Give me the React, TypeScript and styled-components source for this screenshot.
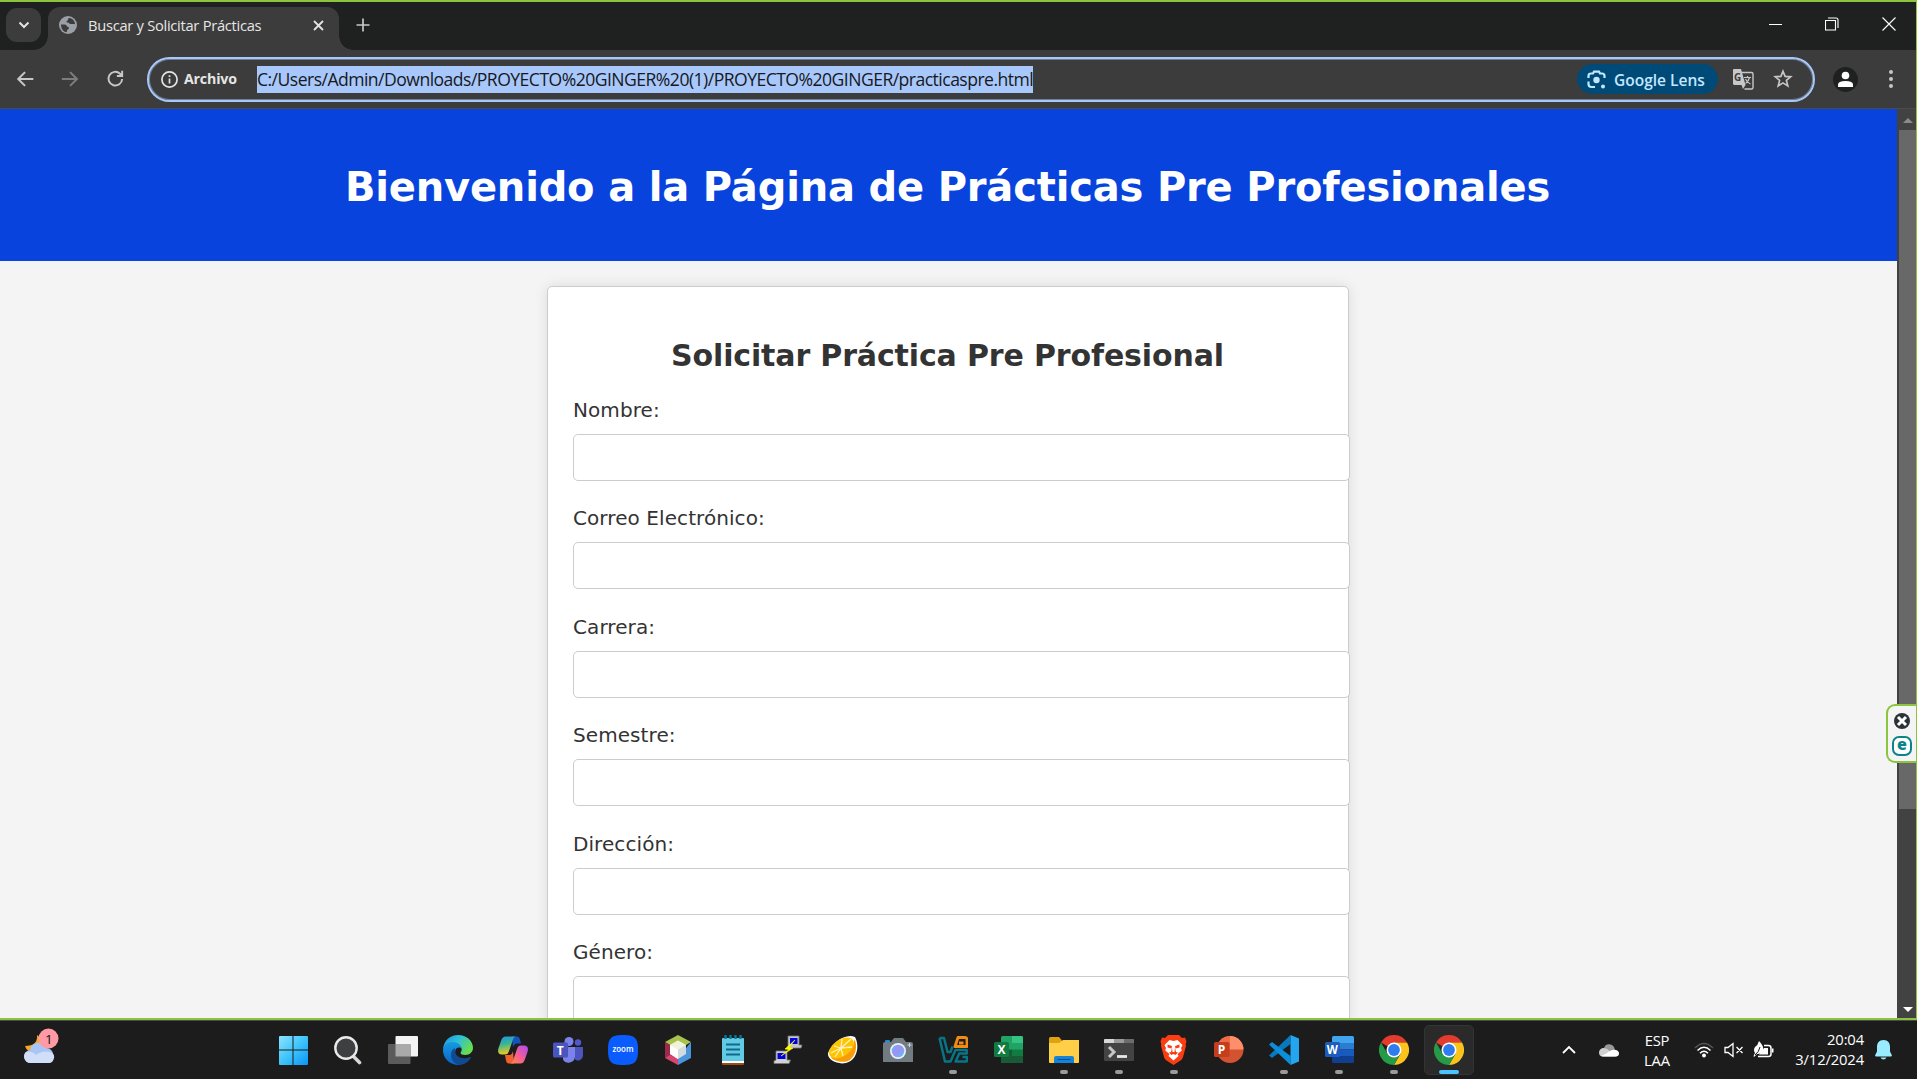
import React from 'react';
import styled, { createGlobalStyle } from 'styled-components';

const Global = createGlobalStyle`
  html, body { margin: 0; padding: 0; background: #1c1c1c; overflow: hidden; }
  * { box-sizing: border-box; }
  svg { display: block; flex: none; }
`;
const ui = `"Open Sans", "Noto Sans", sans-serif`;

const Screen = styled.div`
  width: 1917px; height: 1079px; display: flex; flex-direction: column; overflow: hidden; position: relative;
  font-family: ${ui};
`;
const Browser = styled.div`
  height: 1020px; flex: none; display: flex; flex-direction: column; overflow: hidden;
  border-top: 2px solid #8bc53f; border-right: 1px solid #8bc53f; border-bottom: 2px solid #8bc53f; background: #3c3c3c;
`;
const TabStrip = styled.div`
  height: 48px; flex: none; background: #1f2120; display: flex; padding-left: 6px;
`;
const TabSearch = styled.div`
  width: 35px; height: 34px; margin-top: 6px; border-radius: 11px; background: #3c3c3c; display: grid; place-items: center;
`;
const Tab = styled.div`
  margin: 5px 0 0 7px; width: 291px; height: 43px; border-radius: 12px 12px 0 0; background: #3c3c3c;
  display: flex; align-items: center; padding: 0 14px 7px 11px; gap: 11px; position: relative;
  &::before, &::after { content: ''; position: absolute; bottom: 0; width: 14px; height: 14px; }
  &::before { left: -14px; background: radial-gradient(circle at 0 0, transparent 13.5px, #3c3c3c 14px); }
  &::after { right: -14px; background: radial-gradient(circle at 100% 0, transparent 13.5px, #3c3c3c 14px); }
`;
const TabTitle = styled.span`
  flex: 1; font-size: 14.7px; letter-spacing: -0.28px; color: #e6e6e6; white-space: nowrap;
`;
const NewTab = styled.div`width: 48px; height: 46px; display: grid; place-items: center;`;
const WindowButtons = styled.div`
  margin-left: auto; display: flex; align-items: flex-start; padding: 15px 20px 0 0; gap: 43px;
`;
const Toolbar = styled.div`
  height: 59px; flex: none; display: flex; align-items: center; padding: 0 15px 0 15px; border-bottom: 1px solid #4a4a4a;
`;
const NavButtons = styled.div`display: flex; align-items: center; gap: 23px; width: 132px;`;
const Omnibox = styled.div`
  width: 1668px; height: 45px; border: 2px solid #a8c7fa; border-radius: 23px; display: flex; align-items: center;
  padding: 0 20px 0 12px; box-shadow: inset 0 0 0 1px #6f7d97;
`;
const FileChip = styled.span`
  width: 73px; margin: -1px 0 0 6px; font-size: 14.2px; font-weight: 700; color: #e6e6e6; letter-spacing: -0.18px;
`;
const Url = styled.span`
  height: 27px; line-height: 26px; background: #a8c7fa; color: #17191d; font-size: 17.6px; white-space: nowrap; letter-spacing: -0.54px;
`;
const Lens = styled.div`
  margin-left: auto; width: 141px; height: 30px; border-radius: 15px; background: #004a77; color: #c2e7ff; display: flex;
  align-items: center; padding: 1px 0 0 10px; gap: 8px; font-size: 15.5px; font-weight: 600; white-space: nowrap;
`;
const OmniIcons = styled.div`display: flex; gap: 19px; margin-left: 14px; align-items: center;`;
const Avatar = styled.div`
  width: 25px; height: 25px; border-radius: 50%; background: #1f2120; margin-left: 18px; display: grid; place-items: center;
`;
const MenuDots = styled.div`margin-left: auto;`;

const Viewport = styled.div`flex: 1; min-height: 0; display: flex;`;
const Page = styled.div`
  width: 1897px; background: #f4f4f4; overflow: hidden; display: flex; flex-direction: column; align-items: center;
  font-family: Verdana, "DejaVu Sans", sans-serif; color: #333;
`;
const Hero = styled.header`
  width: 100%; height: 152px; flex: none; background: #0943dd; color: #fff; display: flex; justify-content: center; padding: 52px 2px 0 0;
`;
const HeroTitle = styled.h1`margin: 0; font-size: 40px; line-height: 52px; white-space: nowrap; letter-spacing: -0.18px;`;
const Card = styled.form`
  width: 802px; height: 1100px; flex: none; margin: 25px 1px 0 0; border: 1px solid #ccc; border-radius: 5px; background: #fff;
  box-shadow: 0 0 13px rgba(0,0,0,.1); padding: 50px 25px;
`;
const FormTitle = styled.h2`margin: 0 1px 23px 0; font-size: 30px; line-height: 38px; text-align: center; white-space: nowrap; letter-spacing: -0.14px;`;
const Field = styled.label`display: flex; flex-direction: column; gap: 12px; margin-bottom: 25px; height: 83.4px; font-size: 20px; line-height: 24px; letter-spacing: 0.08px;`;
const Input = styled.input`
  width: 777px; height: 47px; border: 1px solid #ccc; border-radius: 5px; background: #fff; padding: 12px; outline: none;
`;
const Scrollbar = styled.div`
  width: 19px; background: #424242; display: flex; flex-direction: column; align-items: center;
`;
const ArrowUp = styled.div`height: 21px; flex: none; padding-top: 9px; margin-left: 2px;`;
const Thumb = styled.div`width: 17px; height: 679px; margin-left: 2px; background: #686868;`;
const ArrowDown = styled.div`margin-top: auto; margin-left: 2px; height: 11px;`;
const Badge = styled.div`
  position: absolute; left: 1886px; top: 704px; width: 30px; height: 59px; border: 2px solid #8bc53f; border-right: 0;
  border-radius: 9px 0 0 9px; background: #f4f4f4; display: flex; flex-direction: column; align-items: center; padding: 7px 0 0 0; gap: 7px;
`;
const EsetMark = styled.span`
  width: 20px; height: 20px; border: 2px solid #0b838c; border-radius: 7px; background: #fff; color: #0b838c;
  font-size: 16px; font-weight: 800; line-height: 13px; text-align: center;
`;

const Taskbar = styled.div`
  flex: 1; background: #1c1c1c; border-top: 1px solid #494949; display: flex; align-items: flex-start;
`;
const Weather = styled.div`width: 268px; flex: none; padding: 7px 0 0 24px;`;
const Apps = styled.div`display: flex; padding-top: 4px; gap: 5px;`;
const AppButton = styled.div<{ $active?: boolean }>`
  width: 50px; height: 50px; border-radius: 5px; position: relative; display: grid; place-items: center;
  background: ${p => (p.$active ? '#2a2a2a' : 'transparent')};
  border: 1px solid ${p => (p.$active ? '#343434' : 'transparent')};
  &:nth-child(n + 15) { left: 1px; }
`;
const Running = styled.i<{ $active?: boolean }>`
  position: absolute; bottom: 0; left: ${p => (p.$active ? 14 : 20)}px; width: ${p => (p.$active ? 20 : 8)}px; height: 4px; border-radius: 2px;
  background: ${p => (p.$active ? '#4cc2ff' : '#9a9a9a')};
`;
const Tray = styled.div`margin-left: auto; height: 58px; display: flex; align-items: center; color: #fff; padding-right: 25px;`;
const TrayText = styled.div<{ $w: number; $right?: boolean }>`
  width: ${p => p.$w}px; text-align: ${p => (p.$right ? 'right' : 'center')}; font-size: 14.8px; line-height: 20px; white-space: nowrap;
  letter-spacing: ${p => (p.$right ? -0.15 : -0.2)}px; padding-bottom: ${p => (p.$right ? 2 : 1)}px;
  display: flex; flex-direction: column;
`;
const Slot = styled.span<{ $l: number }>`display: flex; margin-left: ${p => p.$l}px;`;

const Line = ({ d, s = 18, c = '#e3e3e3', w = 2, vb = 24 }: { d: string; s?: number; c?: string; w?: number; vb?: number }) => (
  <svg width={s} height={s} viewBox={`0 0 ${vb} ${vb}`} fill="none" stroke={c} strokeWidth={w}><path d={d} /></svg>
);
const Ico = ({ children, s = 30 }: { children: React.ReactNode; s?: number }) => (
  <svg width={s} height={s} viewBox="0 0 30 30" fontFamily="Open Sans, sans-serif">{children}</svg>
);

const Globe = () => (
  <svg width="18" height="18" viewBox="0 0 18 18"><circle cx="9" cy="9" r="9" fill="#9aa0a6" />
    <path d="M2 8.6c2.5-.4 5.3-.2 5.8 1.3.4 1.2 2.1.6 2.2 2 .1 1.5-1.8 1-1.9 2.6-.1 1.1-.4 1.6-1.2 1.7C3.600 15.400 2 12 2 8.600z" fill="#3c3c3c" />
    <path d="M10.500 2c-1.200.4-1.900 1-1.500 1.800.3.7-.9.8-1.400 1.400-.5.700.1 1.300 1.200 1.300 1.400 0 1.300 1.300 2.800 1.500 1.600.2 2.900-.2 4.500.3C15.900 5 13.500 2.500 10.500 2z" fill="#3c3c3c" /></svg>
);

const Chrome = () => (
  <Ico>
    <path d="M15 15L2 7.500A15 15 0 0 1 28 7.500L15 7.500z" fill="#e33b2e" />
    <path d="M28 7.500A15 15 0 0 1 15 30L21.500 18.700 15 7.500z" fill="#fcc31d" />
    <path d="M2 7.500A15 15 0 0 0 15 30L21.500 18.700 8.500 18.700z" fill="#259b48" />
    <circle cx="15" cy="15" r="7.500" fill="#fff" /><circle cx="15" cy="15" r="5.900" fill="#2f7cee" />
  </Ico>
);
const Start = () => (
  <Ico><defs><linearGradient id="win" gradientUnits="userSpaceOnUse" x1="1" y1="1" x2="30" y2="30"><stop stopColor="#8be4ff" /><stop offset=".5" stopColor="#3fc4fb" /><stop offset="1" stopColor="#0a95f5" /></linearGradient></defs>
    <path d="M1 2a1 1 0 0 1 1-1h12.500v13.500H1zM15.500 1H29a1 1 0 0 1 1 1v12.500H15.500zM1 15.500h13.500V30H2a1 1 0 0 1-1-1zM15.500 15.500H30V29a1 1 0 0 1-1 1H15.500z" fill="url(#win)" /></Ico>
);
const Search = () => (
  <Ico><path d="M20.500 21.500l6 6" stroke="#d5d8da" strokeWidth="3.600" strokeLinecap="round" /><circle cx="13" cy="13" r="10.700" fill="#3d3f40" stroke="#e8e9ea" strokeWidth="2.400" /></Ico>
);
const TaskView = () => (
  <Ico><rect x="7.500" y="1" width="22.500" height="20.500" rx="1" fill="#f3f3f3" /><rect x="0" y="9" width="22.500" height="20" rx="1" fill="#5b5b5b" /><path d="M7.500 9h15v12.500h-15z" fill="#a9a9a9" /></Ico>
);
const Edge = () => (
  <Ico><defs><linearGradient id="e1" x2="1" y2=".5"><stop stopColor="#1c8fe0" /><stop offset=".5" stopColor="#2dc0da" /><stop offset="1" stopColor="#68dd4f" /></linearGradient><linearGradient id="e2" x2="0" y2="1"><stop stopColor="#1899e2" /><stop offset="1" stopColor="#0a63c8" /></linearGradient></defs>
    <path d="M0 14C1 5.500 7 0 15 0c8.500 0 15 6 15 12.800 0 4.700-3.700 7.200-7.600 7.200-3 0-4.800-1-4.800-2 0-.8 1.100-1.300 1.100-3.400C18.700 11 14.800 8 10 8 5.500 8 1.800 10.300 0 14z" fill="url(#e1)" />
    <path d="M0 15c0-4.500 4.500-8 10-8 5 0 8.600 3.300 8.700 7-1.800-2.300-5.600-1.800-6.400 1.500C11.300 20.500 15 26 21 27.500c-1.900 1.600-4 2.400-6.500 2.400C6.200 29.700 0 23 0 15z" fill="url(#e2)" />
    <path d="M11.800 13c-2.500 1.300-3.800 4-3.800 7 0 5 3.700 9.300 8.500 9.900 4.800-.2 9.200-3.200 11.300-7.200.4-.7-.3-1-.9-.7-6 2.800-14.700.5-15.100-6z" fill="#104a93" /></Ico>
);
const Copilot = () => (
  <Ico><defs><linearGradient id="c1" x2=".2" y2="1"><stop stopColor="#2294ea" /><stop offset=".45" stopColor="#36b496" /><stop offset="1" stopColor="#e9ca25" /></linearGradient><linearGradient id="c2" x1="1" x2="0" y2="1"><stop stopColor="#a64df0" /><stop offset=".5" stopColor="#f35b9a" /><stop offset="1" stopColor="#ff8d3c" /></linearGradient></defs>
    <path d="M14 1.500h5c2 0 2.600 1.500 3.200 4l.8 3h-4c-2.500 0-3.300 2-4 4z" fill="#1354bf" />
    <path d="M16 28.500h-5c-2 0-2.700-1.500-3.200-4L7 20h4.500c2 0 3-2 3.500-4z" fill="#f0622d" />
    <path d="M8 1.500h10c-2 .3-2.800 2-3.500 4.500L11 16c-.8 2.500-1.800 3.500-4 3.500H4c-4 0-4.500-3-3.500-6.500L3 6c1-3 2-4.500 5-4.500z" fill="url(#c1)" />
    <path d="M22 28.500H12c2-.3 2.800-2 3.500-4.500L19 14c.8-2.500 1.800-3.500 4-3.500h3c4 0 4.500 3 3.500 6.500L27 24c-1 3-2 4.500-5 4.500z" fill="url(#c2)" /></Ico>
);
const Teams = () => (
  <Ico><circle cx="25" cy="7.500" r="3.200" fill="#5059c9" /><path d="M22 12h8v8.500a5 5 0 0 1-8 4z" fill="#4c55be" /><circle cx="16" cy="6.500" r="4.500" fill="#7b83eb" /><path d="M10 12h12v10a6.500 6.500 0 0 1-12 2.500z" fill="#7b83eb" /><rect y="7.500" width="15" height="15" rx="1.500" fill="#4b53bc" /><text x="3.800" y="19.500" fontSize="12" fontWeight="700" fill="#fff">T</text></Ico>
);
const ZoomApp = () => (
  <Ico><path d="M15 0c12 0 15 3 15 15s-3 15-15 15S0 27 0 15 3 0 15 0z" fill="#0b5cff" /><text x="15" y="17.300" fontSize="8" fontWeight="600" fill="#fff" textAnchor="middle" textLength="21" lengthAdjust="spacingAndGlyphs">zoom</text></Ico>
);
const NetBeans = () => (
  <Ico><path d="M15 0l13 7-13 8L2 7z" fill="#a7c34c" /><path d="M2 7l7 4v10l-7 2z" fill="#9b2a49" /><path d="M28 7v16l-13 7v-7z" fill="#4c94dc" /><path d="M2 23l5-3 8 3v7z" fill="#d9456d" /><path d="M15 5.500l8 4.500v9l-8 5-8-5v-9z" fill="#d3dbe0" /><path d="M15 5.500l8 4.500-8 4.500L7 10z" fill="#f1f3d9" /><path d="M7 10l8 4.500V24l-8-5z" fill="#fff" /></Ico>
);
const Notepad = () => (
  <Ico><rect x="4" y="3" width="22" height="26" rx="1" fill="#62cbe4" /><path d="M4 26h22v2H4z" fill="#fff" /><path d="M4 28h22v1a1 1 0 0 1-1 1H5a1 1 0 0 1-1-1z" fill="#a3480e" /><path d="M7.500 0v4M12.500 0v4M17.500 0v4M22.500 0v4" stroke="#087799" strokeWidth="2.400" /><path d="M8 9.500h14M8 14.500h14M8 19.500h14" stroke="#12698a" strokeWidth="1.800" /></Ico>
);
const Putty = () => (
  <Ico><path d="M15 1h11v9h3l-1 3H15z" fill="#c6c6c6" stroke="#777" strokeWidth=".8" /><path d="M17 3h7.500v6H17z" fill="#0000e0" /><path d="M3 16h11v9h3.500l-1.500 3.500H1V26l2-1z" fill="#d2d2d2" stroke="#777" strokeWidth=".8" /><path d="M4.500 18h8v6h-8z" fill="#0000e0" /><path d="M22 5l-10 9 4 .5-8 6.500 12-8-4-.5z" fill="#ff0" stroke="#ff0" strokeWidth=".6" /></Ico>
);
const Orange = () => (
  <Ico><path d="M27 2c5 9 2 24-9 26C8 30-1 24 0 18 4 8 17-2 27 2z" fill="#fff" /><path d="M26.500 4c4 9 0 20-8 22.500C10 28 3 24 3 22 14 24 26 15 26.500 4z" fill="#f79c0b" /><ellipse cx="13.500" cy="13" rx="14" ry="8.300" transform="rotate(-35 13.500 13)" fill="#ffc400" /><path d="M13 13L3 18m10-5l-7-2m7 2l1-9m-1 9L23 4M13 13l11-1M13 13l2 8M13 13l-6 9" stroke="#fff1bd" strokeWidth="1.300" /></Ico>
);
const Camera = () => (
  <Ico><defs><linearGradient id="lens" x2="1" y2="1"><stop stopColor="#64b6ff" /><stop offset=".5" stopColor="#a18ff1" /><stop offset="1" stopColor="#44cfff" /></linearGradient></defs><path d="M2 7V6q0-1 1-1h3q1 0 1 1v1z" fill="#168ddb" /><path d="M2 7h6l3-4h9l3 4h5a2 2 0 0 1 2 2v18H0V9a2 2 0 0 1 2-2z" fill="#717b82" /><circle cx="15" cy="16" r="8" fill="#eef1f3" /><circle cx="15" cy="16" r="6.300" fill="url(#lens)" /><path d="M26.500 8v4M24.500 10h4" stroke="#cfd5d9" /></Ico>
);
const VBox = () => (
  <Ico><g fill="none" strokeLinejoin="round"><path d="M1.500 3h4.500l3.500 14h3l2-5.500M1.500 3l5.500 23.500h5.500l5-11.500h11.200v3.500h-7.500l-3.500 8H28q1 0 1-1V22h-4.500" stroke="#087586" strokeWidth="2.500" /><path d="M17 11.500h12V5q0-2.500-2-2.500h-7zM21 8h4.500" stroke="#f28b12" strokeWidth="2.900" /></g></Ico>
);
const Excel = () => (
  <Ico><rect x="8" y="1" width="22" height="27" rx="1.500" fill="#21a366" /><path d="M19 1h9.500A1.500 1.500 0 0 1 30 2.500V8H19z" fill="#33c481" /><path d="M8 14.500h11V21H8z" fill="#185c37" /><path d="M19 14.500h11V21H19z" fill="#107c41" /><path d="M8 21h22v5.500a1.500 1.500 0 0 1-1.500 1.500H9.500A1.500 1.500 0 0 1 8 26.500z" fill="#185c37" /><rect x="1" y="7" width="15" height="15" rx="1.500" fill="#107c41" /><text x="4.500" y="19" fontSize="12" fontWeight="700" fill="#fff">X</text></Ico>
);
const Folder = () => (
  <Ico><path d="M0 3.500Q0 2 1.500 2H10l3 3.500V9H0z" fill="#e0a20e" /><path d="M0 8h10l4-3h16v22a1 1 0 0 1-1 1H1a1 1 0 0 1-1-1z" fill="#ffcf48" /><path d="M5 28v-5q0-2 2-2h16q2 0 2 2v5z" fill="#1683d8" /><path d="M8.500 24.500h13" stroke="#064b8a" /></Ico>
);
const Terminal = () => (
  <Ico><path d="M0 5a1 1 0 0 1 1-1h28a1 1 0 0 1 1 1v20a1 1 0 0 1-1 1H1a1 1 0 0 1-1-1z" fill="#434343" /><path d="M0 5a1 1 0 0 1 1-1h9v4H0z" fill="#d7d7d7" /><path d="M10 4h10v4H10z" fill="#9a9a9a" /><path d="M20 4h9a1 1 0 0 1 1 1v3H20z" fill="#6e6b6e" /><path d="M5 12l5 5-5 5" fill="none" stroke="#c6c6c6" strokeWidth="3" /><path d="M13 21.500h10" stroke="#e8e8e8" strokeWidth="2.800" /></Ico>
);
const Brave = () => (
  <Ico><path d="M9 0h11l3 3 3-.5 1.500 4-.8 2.500.3 2-3 11q-.6 2-2.500 3.500L14.500 30l-7-4.500Q5.500 24 5 22l-3-11 .3-2L1.500 6.500 3 2.500l3 .5z" fill="#fb3d12" />
    <path d="M10.500 5l4 1 4-1 5 5-1.500 3 .8 2.500-4.300 3.500 1 2-5 4.500L9.500 21l1-2-4.300-3.500.8-2.500-1.500-3z" fill="#fff" />
    <path d="M8.500 9.500L13 11l-.5 2.500-4-1zM20.500 9.500L16 11l.5 2.500 4-1zM13 13l-1 4-2 .5 2.500 2.500 2-1 2 1 2.500-2.500-2-.5-1-4-.5 4h-2z" fill="#fb3d12" /></Ico>
);
const PowerPoint = () => (
  <Ico><circle cx="16" cy="14.500" r="13.500" fill="#d35230" /><path d="M16 1A13.500 13.500 0 0 0 2.500 14.500H16z" fill="#ed6c47" /><path d="M16 1A13.500 13.500 0 0 1 29.500 14.500H16z" fill="#ff8f6b" /><rect x="0" y="7" width="15.500" height="15" rx="1.500" fill="#c43e1c" /><text x="3.700" y="19" fontSize="12" fontWeight="700" fill="#fff">P</text></Ico>
);
const Code = () => (
  <Ico><path d="M21.500 0v9L3 23l-3-2.500z" fill="#0879be" /><path d="M0 9.500L3 7l18.500 14v9z" fill="#0c8fdb" /><path d="M21.500 0L30 3.500v23L21.500 30z" fill="#24a5ef" /></Ico>
);
const Word = () => (
  <Ico><path d="M8 2.500A1.500 1.500 0 0 1 9.500 1h19A1.500 1.500 0 0 1 30 2.500V8H8z" fill="#41a5ee" /><path d="M8 8h22v6.500H8z" fill="#2b7cd3" /><path d="M8 14.500h22V21H8z" fill="#185abd" /><path d="M8 21h22v5.500a1.500 1.500 0 0 1-1.500 1.500h-19A1.500 1.500 0 0 1 8 26.500z" fill="#103f91" /><rect x="1" y="7" width="15" height="15" rx="1.500" fill="#1b5cbe" /><text x="2.700" y="19" fontSize="11.500" fontWeight="700" fill="#fff">W</text></Ico>
);

const apps: { icon: React.FC; state?: 'run' | 'active' }[] = [
  { icon: Start }, { icon: Search }, { icon: TaskView }, { icon: Edge }, { icon: Copilot }, { icon: Teams }, { icon: ZoomApp },
  { icon: NetBeans }, { icon: Notepad }, { icon: Putty }, { icon: Orange }, { icon: Camera }, { icon: VBox, state: 'run' },
  { icon: Excel }, { icon: Folder, state: 'run' }, { icon: Terminal, state: 'run' }, { icon: Brave, state: 'run' }, { icon: PowerPoint },
  { icon: Code, state: 'run' }, { icon: Word, state: 'run' }, { icon: Chrome, state: 'run' }, { icon: Chrome, state: 'active' },
];
const fields = ['Nombre:', 'Correo Electrónico:', 'Carrera:', 'Semestre:', 'Dirección:', 'Género:'];

export default function App() {
  return (
    <Screen>
      <Global />
      <Browser>
        <TabStrip>
          <TabSearch><Line d="M2.500 4.500L7 9l4.500-4.500" s={14} vb={14} /></TabSearch>
          <Tab>
            <Globe /><TabTitle>Buscar y Solicitar Prácticas</TabTitle>
            <Line d="M2 2l9 9M11 2l-9 9" s={13} vb={13} w={1.800} />
          </Tab>
          <NewTab><Line d="M7 .5v13M.5 7h13" s={14} vb={14} w={1.700} c="#c7c7c7" /></NewTab>
          <WindowButtons>
            <Line d="M1 7.500h13" s={14} vb={14} w={1} c="#fff" />
            <Line d="M.5 3.500h10v9.500H.5zM3 1h8q2 0 2 2v8" s={14} vb={14} w={1.100} c="#fff" />
            <Line d="M.5.500l13 13M13.500.500l-13 13" s={14} vb={14} w={1.100} c="#fff" />
          </WindowButtons>
        </TabStrip>
        <Toolbar>
          <NavButtons>
            <Line d="M20 12H3M11 4.500L3.500 12l7.500 7.500" s={22} vb={24} w={2.200} c="#c7c7c7" />
            <Line d="M2 12h17M11 4.500l7.500 7.500-7.500 7.500" s={22} vb={24} w={2.200} c="#7d7d7d" />
            <Line d="M19.500 12.500a7.800 7.800 0 1 1-2.400-6l2.400 2.500M19.500 3v6h-6" s={22} vb={25} w={2.200} c="#c7c7c7" />
          </NavButtons>
          <Omnibox>
            <svg width="17" height="17" viewBox="0 0 17 17" fill="none" stroke="#e3e3e3" strokeWidth="1.700"><circle cx="8.500" cy="8.500" r="7.600" /><path d="M8.500 7.500v5M8.500 4.300v1.800" /></svg>
            <FileChip>Archivo</FileChip>
            <Url>C:/Users/Admin/Downloads/PROYECTO%20GINGER%20(1)/PROYECTO%20GINGER/practicaspre.html</Url>
            <Lens>
              <svg width="19" height="19" viewBox="0 0 19 19" fill="none" stroke="#c2e7ff" strokeWidth="2.200"><path d="M1.500 8V6q0-2.500 2.500-2.500h2L7 1.700h5l1 1.800h2q2.500 0 2.500 2.500v2M1.500 11.500V14q0 3 3 3H8" /><circle cx="9.500" cy="10" r="3.200" fill="#c2e7ff" stroke="none" /><circle cx="16" cy="16.500" r="2" fill="#c2e7ff" stroke="none" /></svg>
              Google Lens
            </Lens>
            <OmniIcons>
              <svg width="22" height="22" viewBox="0 0 22 22"><path d="M8 4.500h11.500a1.500 1.500 0 0 1 1.500 1.500v13.500a1.500 1.500 0 0 1-1.500 1.500H12.500" fill="none" stroke="#c7c7c7" strokeWidth="1.400" /><path d="M2 1h7l4.500 16H2.500A1.500 1.500 0 0 1 1 15.500V2a1 1 0 0 1 1-1z" fill="#c7c7c7" /><path d="M9.500 17h4l-2.500 4z" fill="#c7c7c7" /><text x="2" y="12.800" fontSize="10" fontWeight="700" fill="#3c3c3c">G</text><path d="M12 9.500h7M15.500 8v1.500M17.500 9.500q-1 4-4 6M13.500 11q1.500 3.500 5 5" fill="none" stroke="#c7c7c7" strokeWidth="1.200" /></svg>
              <svg width="20" height="20" viewBox="0 0 20 20" fill="none" stroke="#c7c7c7" strokeWidth="1.700"><path d="M10 2.200l2.100 5.200 5.600.4-4.300 3.600 1.400 5.500L10 13.900l-4.800 3 1.400-5.500-4.300-3.600 5.600-.4z" /></svg>
            </OmniIcons>
          </Omnibox>
          <Avatar><svg width="17" height="17" viewBox="0 0 17 17" fill="#fff"><circle cx="8.500" cy="4.500" r="3.800" /><path d="M1 16v-2.500Q1 10 8.500 10t7.500 3.500V16z" /></svg></Avatar>
          <MenuDots><svg width="20" height="24" viewBox="0 0 20 24" fill="#c7c7c7"><circle cx="10" cy="5" r="2" /><circle cx="10" cy="12" r="2" /><circle cx="10" cy="19" r="2" /></svg></MenuDots>
        </Toolbar>
        <Viewport>
          <Page>
            <Hero><HeroTitle>Bienvenido a la Página de Prácticas Pre Profesionales</HeroTitle></Hero>
            <Card>
              <FormTitle>Solicitar Práctica Pre Profesional</FormTitle>
              {fields.map(f => <Field key={f}>{f}<Input /></Field>)}
            </Card>
          </Page>
          <Scrollbar>
            <ArrowUp><svg width="10" height="5" viewBox="0 0 10 5"><path d="M0 5l5-5 5 5z" fill="#8b8b8b" /></svg></ArrowUp>
            <Thumb />
            <ArrowDown><svg width="10" height="5" viewBox="0 0 10 5"><path d="M0 0l5 5 5-5z" fill="#fff" /></svg></ArrowDown>
          </Scrollbar>
        </Viewport>
      </Browser>
      <Taskbar>
        <Weather>
          <svg width="36" height="38" viewBox="0 0 36 38" fontFamily="Open Sans, sans-serif"><path d="M13 7q1 11-12 11 2 6 8 6l9-4 1-8z" fill="#f9a825" /><path d="M7 35a6.500 6.500 0 0 1-1-13 9 9 0 0 1 17-2 8 8 0 0 1 2 15z" fill="#a9c5f7" /><path d="M7 35a6.500 6.500 0 0 1-5-11q7-1 10 3 6-5 14-3 5 2 4 6-1 5-5 5z" fill="#d0def7" /><circle cx="24.500" cy="10.500" r="10" fill="#ff99a4" /><text x="24.800" y="15.500" fontSize="13.500" textAnchor="middle" fill="#111">1</text></svg>
        </Weather>
        <Apps>
          {apps.map(({ icon: I, state }, i) => (
            <AppButton key={i} $active={state === 'active'}><I />{state && <Running $active={state === 'active'} />}</AppButton>
          ))}
        </Apps>
        <Tray>
          <Line d="M1 10l6-6 6 6" s={14} vb={14} c="#fff" w={1.800} />
          <Slot $l={23}><svg width="20" height="14" viewBox="0 0 20 14"><path d="M5 5a5.500 5.500 0 0 1 10-1l1 3-9 3-6-2q1-3 4-3z" fill="#999" /><path d="M0 9.500Q0 6 4 5q4 0 7 3l8 4q-1 1.500-3 1.500H4q-4 0-4-4z" fill="#d0d0d0" /><path d="M2 13q5-2 9-5 3-2 6-1 3 1 3 3.500 0 3-3.500 3H4z" fill="#fff" /></svg></Slot>
          <Slot $l={22}><TrayText $w={32}><span>ESP</span><span>LAA</span></TrayText></Slot>
          <Slot $l={21}><svg width="20" height="16" viewBox="0 0 20 16" fill="none" strokeWidth="1.500"><path d="M1 6q9-9 18 0" stroke="#555" /><path d="M3.500 8.500q6.500-6.500 13 0M6 11.200q4-4 8 0" stroke="#fff" /><circle cx="10" cy="13.500" r="2" fill="#fff" /></svg></Slot>
          <Slot $l={10}><svg width="20" height="16" viewBox="0 0 20 16" fill="none" stroke="#fff" strokeWidth="1.300"><path d="M1 5.500h3L9 1.500v13l-5-4H1zM12.500 5l6 6M18.500 5l-6 6" /></svg></Slot>
          <Slot $l={9}><svg width="21" height="18" viewBox="0 0 21 18"><path d="M11 4.500h4.500Q18 4.500 18 7v6q0 2.500-2.500 2.500H5" fill="none" stroke="#fff" strokeWidth="1.500" /><path d="M19 7.500h1.500v4H19zM11 7h4v6.500H6z" fill="#fff" /><path d="M6 0q5 5 4 9t-6 4l-3 3q-1-1 1-4-2-3 0-6 3-2 4-6z" fill="#fff" /><path d="M2 14q4-3 5-8" fill="none" stroke="#1c1c1c" /></svg></Slot>
          <Slot $l={20}><TrayText $w={70} $right><span>20:04</span><span>3/12/2024</span></TrayText></Slot>
          <Slot $l={11}><svg width="17" height="20" viewBox="0 0 17 20" fill="#99ebff"><path d="M8.500 0C4 0 2 3 2 7v4.500L.2 15q-.4 1.500 1 1.500h14.600q1.400 0 1-1.500L15 11.500V7c0-4-2-7-6.500-7zM5.500 17.500h6q-1 2-3 2t-3-2z" /></svg></Slot>
        </Tray>
      </Taskbar>
      <Badge>
        <svg width="16" height="16" viewBox="0 0 16 16"><circle cx="8" cy="8" r="8" fill="#2c3238" /><path d="M4 4l8 8M12 4l-8 8" stroke="#fff" strokeWidth="3" /></svg>
        <EsetMark>e</EsetMark>
      </Badge>
    </Screen>
  );
}
